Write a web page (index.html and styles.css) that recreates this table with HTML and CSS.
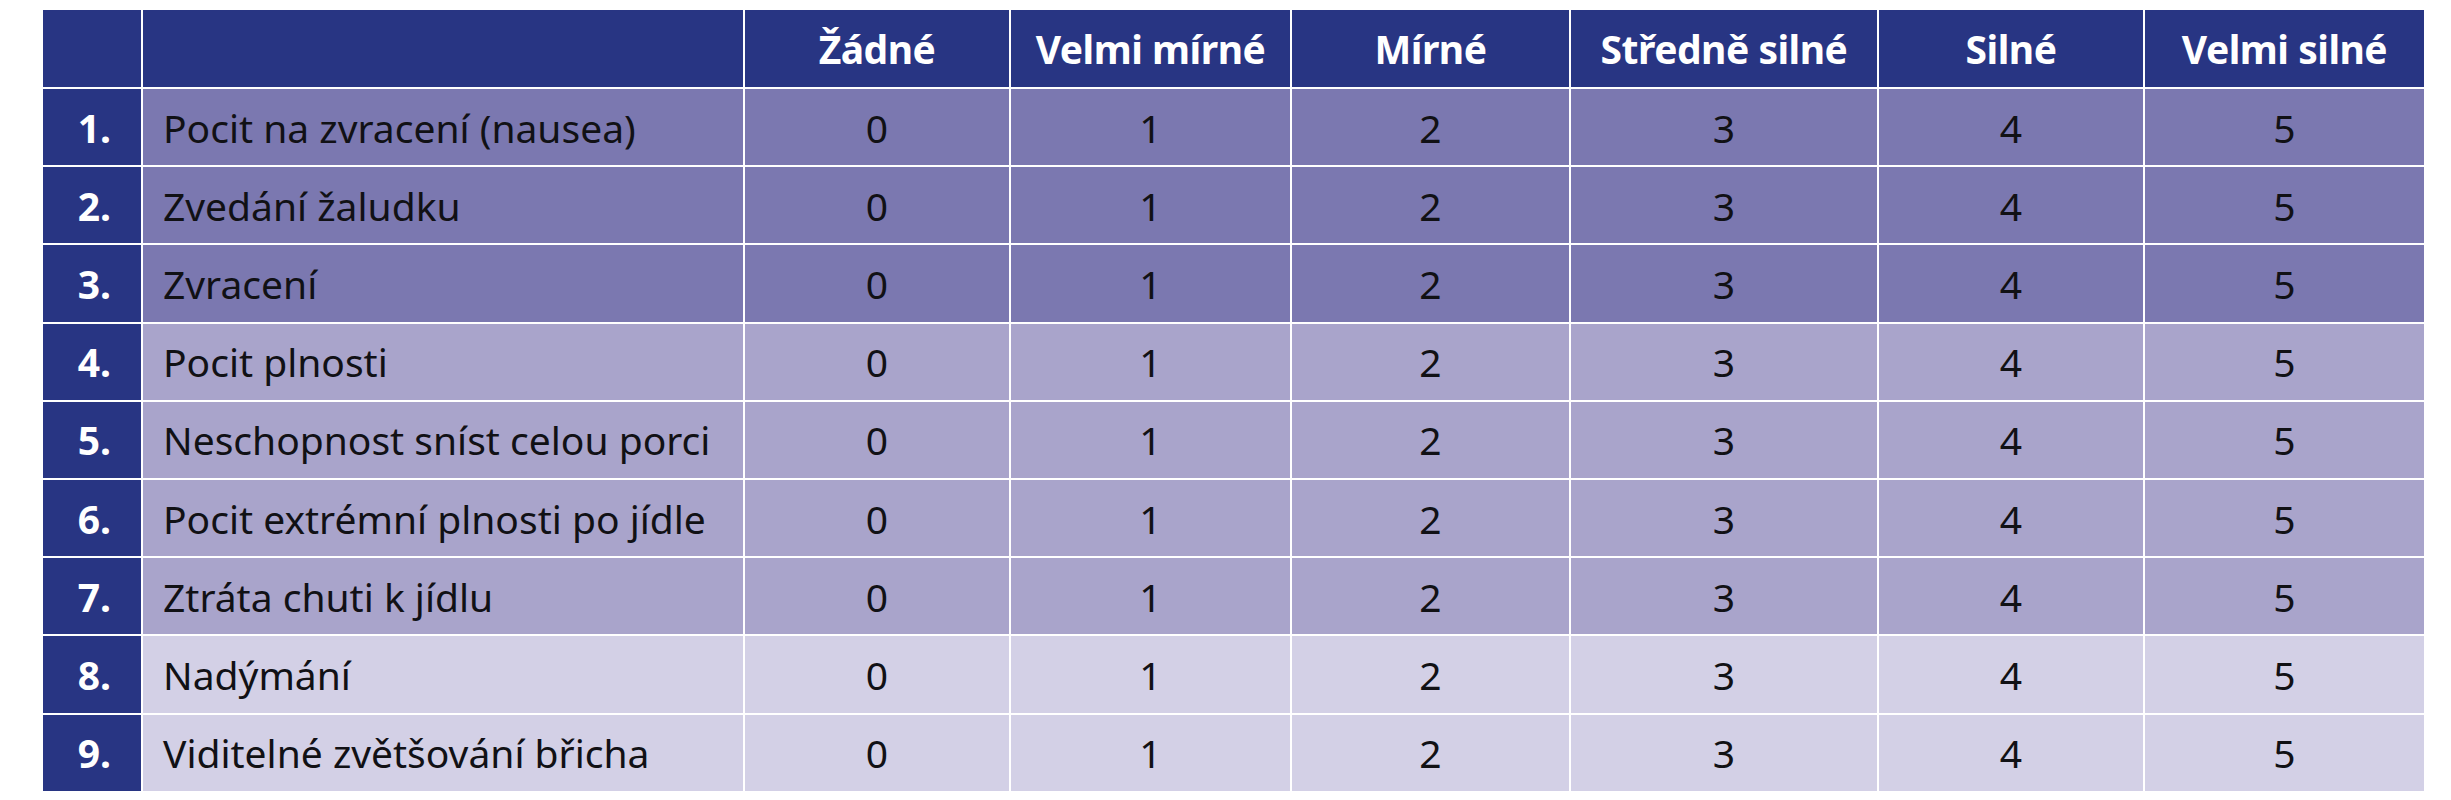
FILE: index.html
```html
<!DOCTYPE html>
<html lang="cs">
<head>
<meta charset="utf-8">
<title>Symptomy</title>
<link rel="stylesheet" href="styles.css">
</head>
<body>
<table class="scale">
  <colgroup>
    <col class="c-num">
    <col class="c-label">
    <col class="c-v1">
    <col class="c-v2">
    <col class="c-v3">
    <col class="c-v4">
    <col class="c-v5">
    <col class="c-v6">
  </colgroup>
  <thead>
    <tr class="head">
      <th class="num"></th>
      <th class="label"></th>
      <th>Žádné</th>
      <th>Velmi mírné</th>
      <th>Mírné</th>
      <th>Středně silné</th>
      <th>Silné</th>
      <th>Velmi silné</th>
    </tr>
  </thead>
  <tbody>
    <tr class="tone-a"><th class="num">1.</th><td class="label">Pocit na zvracení (nausea)</td><td>0</td><td>1</td><td>2</td><td>3</td><td>4</td><td>5</td></tr>
    <tr class="tone-a"><th class="num">2.</th><td class="label">Zvedání žaludku</td><td>0</td><td>1</td><td>2</td><td>3</td><td>4</td><td>5</td></tr>
    <tr class="tone-a"><th class="num">3.</th><td class="label">Zvracení</td><td>0</td><td>1</td><td>2</td><td>3</td><td>4</td><td>5</td></tr>
    <tr class="tone-b"><th class="num">4.</th><td class="label">Pocit plnosti</td><td>0</td><td>1</td><td>2</td><td>3</td><td>4</td><td>5</td></tr>
    <tr class="tone-b"><th class="num">5.</th><td class="label">Neschopnost sníst celou porci</td><td>0</td><td>1</td><td>2</td><td>3</td><td>4</td><td>5</td></tr>
    <tr class="tone-b"><th class="num">6.</th><td class="label">Pocit extrémní plnosti po jídle</td><td>0</td><td>1</td><td>2</td><td>3</td><td>4</td><td>5</td></tr>
    <tr class="tone-b"><th class="num">7.</th><td class="label">Ztráta chuti k jídlu</td><td>0</td><td>1</td><td>2</td><td>3</td><td>4</td><td>5</td></tr>
    <tr class="tone-c"><th class="num">8.</th><td class="label">Nadýmání</td><td>0</td><td>1</td><td>2</td><td>3</td><td>4</td><td>5</td></tr>
    <tr class="tone-c"><th class="num">9.</th><td class="label">Viditelné zvětšování břicha</td><td>0</td><td>1</td><td>2</td><td>3</td><td>4</td><td>5</td></tr>
  </tbody>
</table>
</body>
</html>
```
FILE: styles.css
```css
html, body {
  margin: 0;
  padding: 0;
  background: #ffffff;
}

body {
  font-family: "Noto Sans", "Open Sans", "Liberation Sans", sans-serif;
  color: #111115;
}

.scale {
  margin: 8px 0 0 41px;
  border-collapse: separate;
  border-spacing: 2px;
  table-layout: fixed;
  width: 2385px;
}

.c-num { width: 98px; }
.c-label { width: 600px; }
.c-v1 { width: 264px; }
.c-v2 { width: 279px; }
.c-v3 { width: 277px; }
.c-v4 { width: 306px; }
.c-v5 { width: 264px; }
.c-v6 { width: 279px; }

.scale th,
.scale td {
  padding: 0;
  text-align: center;
  vertical-align: middle;
  font-size: 39px;
  line-height: 1;
  white-space: nowrap;
}

.head th {
  height: 77px;
  background: #283583;
  color: #ffffff;
  font-weight: 700;
  letter-spacing: -0.5px;
}

.scale tbody tr {
  height: 76.2px;
}

.scale tbody td {
  font-weight: 400;
}

.scale th.num {
  background: #283583;
  color: #ffffff;
  font-weight: 700;
  text-align: right;
  padding-right: 30px;
}

.scale td.label {
  text-align: left;
  padding-left: 20px;
}

.tone-a td { background: #7b78b0; }
.tone-b td { background: #a9a4cb; }
.tone-c td { background: #d3d0e6; }
```
